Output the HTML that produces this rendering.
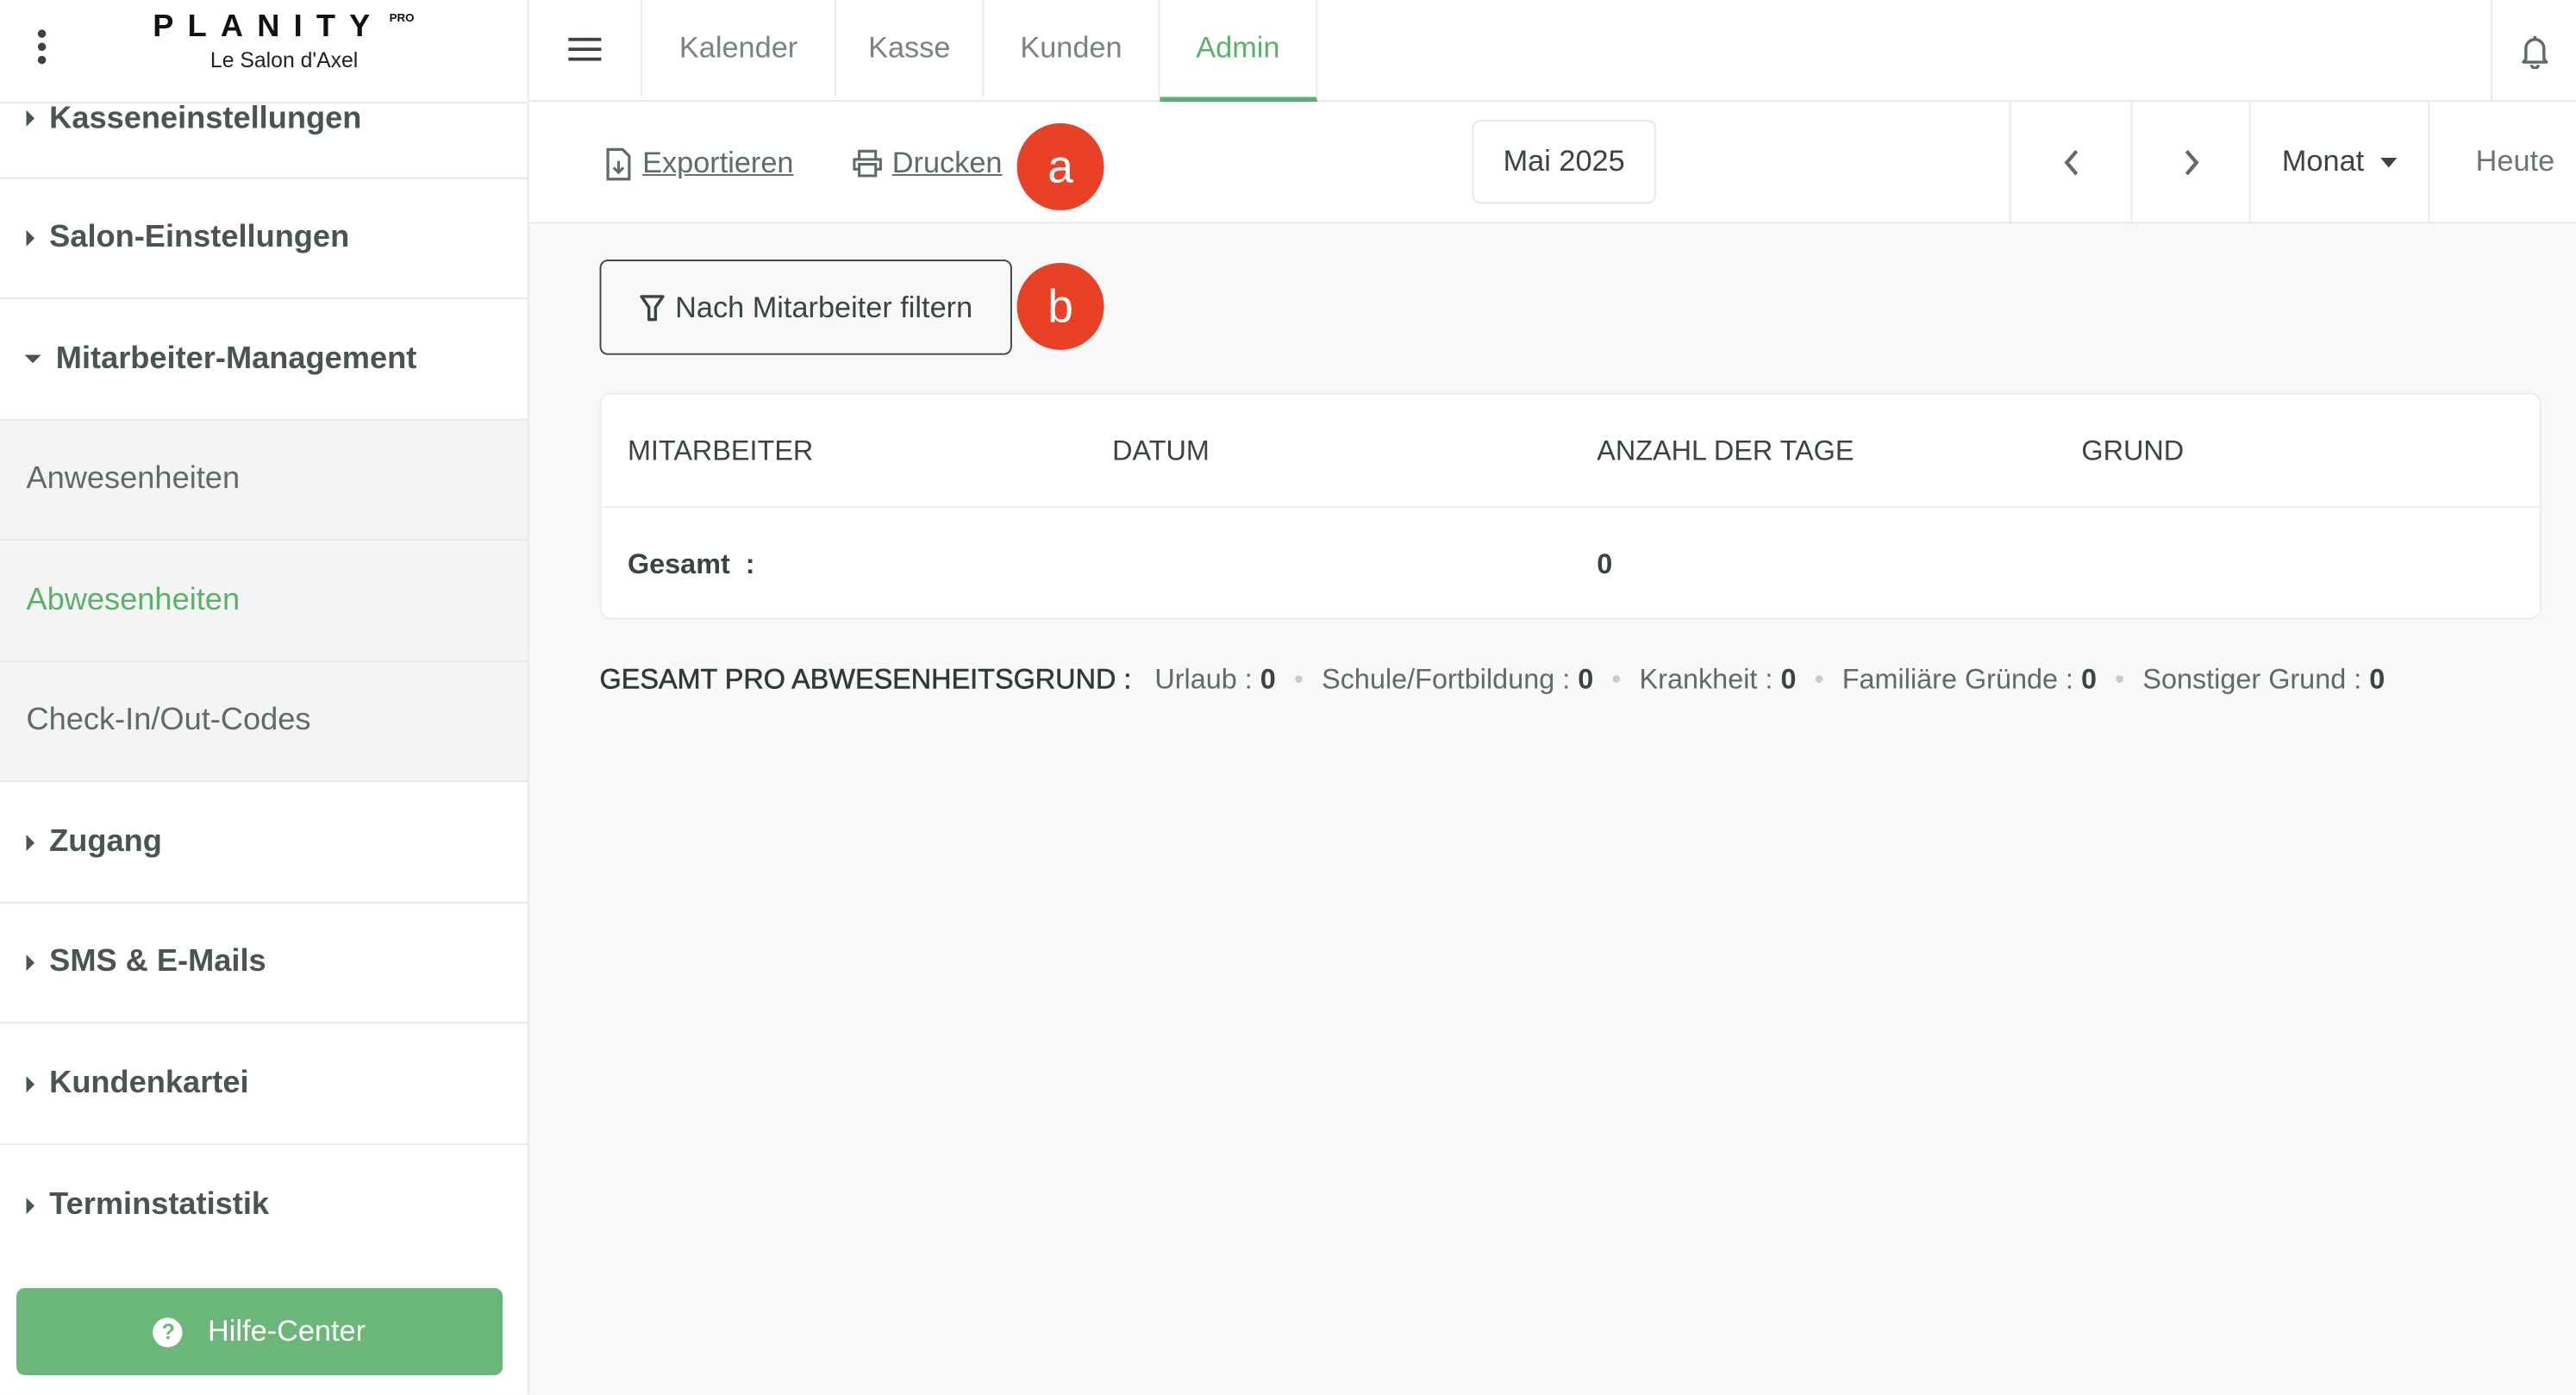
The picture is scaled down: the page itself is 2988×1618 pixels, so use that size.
<!DOCTYPE html>
<html><head><meta charset="utf-8"><style>
*{box-sizing:border-box;margin:0;padding:0}
html,body{width:2988px;height:1618px;overflow:hidden;background:#f8f8f8}
#w{position:absolute;left:0;top:0;width:1568px;height:849px;transform:scale(1.90561);transform-origin:0 0;font-family:"Liberation Sans",sans-serif;color:#3a4440;background:#f8f8f8}
.a{position:absolute}
.side{left:0;top:0;width:322px;height:849px;background:#fff;border-right:1px solid #e8e8e8}
.item{position:absolute;left:0;width:321px;border-bottom:1px solid #e8e8e8;font-size:19px;font-weight:bold;color:#4a5450;padding-left:30px;display:flex;align-items:center}
.item .tri{position:absolute;left:16px;width:0;height:0;border-top:5px solid transparent;border-bottom:5px solid transparent;border-left:5px solid #4a5450}
.sub{background:#f4f4f4;font-weight:normal;color:#5f6b66;padding-left:16px}
.top{left:322px;top:0;width:1246px;height:62px;background:#fff;border-bottom:1px solid #e8e8e8}
.tab{position:absolute;top:0;height:59px;border-right:1px solid #eaeaea;font-size:18px;color:#7a8480;display:flex;align-items:center;justify-content:center}
.bar{left:322px;top:62px;width:1246px;height:74px;background:#fff;border-bottom:1px solid #e8e8e8}
.cell{position:absolute;top:0;height:73px;border-left:1px solid #eaeaea;display:flex;align-items:center;justify-content:center;font-size:18px}
.badge{position:absolute;width:53px;height:53px;border-radius:50%;background:#e84127;color:#fff;font-size:28px;display:flex;align-items:center;justify-content:center}
.lnk{font-size:18px;color:#5f6b66;text-decoration:underline}
.th{position:absolute;top:25px;font-size:17px;color:#3a4440}
.sum{left:365px;top:404px;font-size:17px;color:#5f6b66;white-space:nowrap}
.sum b{color:#3a4440}
.dot{color:#c8cdcb;margin:0 11px}
</style></head><body><div id="w">
<div class="a side">
 <div class="a" style="left:23px;top:18px;width:6px">
  <div style="width:5px;height:5px;border-radius:50%;background:#3a4440;margin-bottom:3px"></div>
  <div style="width:5px;height:5px;border-radius:50%;background:#3a4440;margin-bottom:3px"></div>
  <div style="width:5px;height:5px;border-radius:50%;background:#3a4440"></div>
 </div>
 <div class="a" style="left:93px;top:6px;font-size:19px;font-weight:bold;letter-spacing:8.5px;color:#111">PLANITY</div>
 <div class="a" style="left:237px;top:8px;font-size:7px;color:#111;font-weight:bold">PRO</div>
 <div class="a" style="left:128px;top:29px;font-size:13px;color:#222">Le Salon d'Axel</div>
 <div class="a" style="left:0;top:62px;width:321px;height:1px;background:#e8e8e8"></div>
 <div class="item" style="top:62px;height:47px;align-items:flex-start;padding-top:0"><span class="tri" style="top:5px"></span>Kasseneinstellungen</div>
 <div class="item" style="top:109px;height:73px"><span class="tri"></span>Salon-Einstellungen</div>
 <div class="item" style="top:182px;height:74px;padding-left:34px"><span class="tri" style="border-left:5px solid transparent;border-right:5px solid transparent;border-top:5px solid #4a5450;border-bottom:0;left:15px"></span>Mitarbeiter-Management</div>
 <div class="item sub" style="top:256px;height:73px">Anwesenheiten</div>
 <div class="item sub" style="top:329px;height:74px;color:#5cb06c">Abwesenheiten</div>
 <div class="item sub" style="top:403px;height:73px">Check-In/Out-Codes</div>
 <div class="item" style="top:476px;height:74px"><span class="tri"></span>Zugang</div>
 <div class="item" style="top:550px;height:73px"><span class="tri"></span>SMS &amp; E-Mails</div>
 <div class="item" style="top:623px;height:74px"><span class="tri"></span>Kundenkartei</div>
 <div class="item" style="top:697px;height:73px;border-bottom:0"><span class="tri"></span>Terminstatistik</div>
 <div class="a" style="left:10px;top:784px;width:296px;height:53px;background:#6ab779;border-radius:5px;color:#fff;font-size:18px;display:flex;align-items:center;justify-content:center">
  <span style="width:18px;height:18px;border-radius:50%;background:#fff;color:#6ab779;font-size:13px;font-weight:bold;display:inline-flex;align-items:center;justify-content:center;margin-right:15px">?</span>Hilfe-Center</div>
</div>
<div class="a top">
 <div class="tab" style="left:0;width:69px"><div><div style="width:20px;height:2px;background:#3a4440;margin:4px 0"></div><div style="width:20px;height:2px;background:#3a4440;margin:4px 0"></div><div style="width:20px;height:2px;background:#3a4440;margin:4px 0"></div></div></div>
 <div class="tab" style="left:69px;width:118px">Kalender</div>
 <div class="tab" style="left:187px;width:90px">Kasse</div>
 <div class="tab" style="left:277px;width:107px">Kunden</div>
 <div class="tab" style="left:384px;width:96px;height:62px;color:#5cb06c;border-bottom:3px solid #5cb06c">Admin</div>
 <div class="tab" style="left:1194px;width:52px;height:62px;border-right:0;border-left:1px solid #eaeaea">
  <svg width="20" height="22" viewBox="0 0 20 22"><path d="M10 2v1.5M4.5 16V9.5a5.5 5.5 0 0111 0V16l1.5 1.8H3L4.5 16zM8 19.5a2 2 0 004 0" fill="none" stroke="#5f6b66" stroke-width="1.8" stroke-linejoin="round"/></svg></div>
</div>
<div class="a bar">
 <div class="a" style="left:46px;top:27px;display:flex;align-items:center">
  <svg width="17" height="20" viewBox="0 0 17 20"><path d="M2 1h9l4 4v14H2z" fill="none" stroke="#5f6b66" stroke-width="1.7"/><path d="M8.5 8v7M5.5 12l3 3 3-3" fill="none" stroke="#5f6b66" stroke-width="1.6"/></svg>
  <span class="lnk" style="margin-left:6px">Exportieren</span></div>
 <div class="a" style="left:197px;top:27px;display:flex;align-items:center">
  <svg width="18" height="17" viewBox="0 0 18 17"><path d="M4 6V1h10v5M4 12H1V6h16v6h-3M4 9h10v7H4z" fill="none" stroke="#5f6b66" stroke-width="1.6"/></svg>
  <span class="lnk" style="margin-left:6px">Drucken</span></div>
 <div class="badge" style="left:297px;top:13px">a</div>
 <div class="a" style="left:574px;top:11px;width:112px;height:51px;border:1px solid #e8e8e8;border-radius:5px;background:#fff;display:flex;align-items:center;justify-content:center;font-size:18px;color:#3a4440">Mai 2025</div>
 <div class="cell" style="left:901px;width:74px"><svg width="12" height="18" viewBox="0 0 12 18"><path d="M9 2L3 9l6 7" fill="none" stroke="#5f6b66" stroke-width="2.2"/></svg></div>
 <div class="cell" style="left:975px;width:72px"><svg width="12" height="18" viewBox="0 0 12 18"><path d="M3 2l6 7-6 7" fill="none" stroke="#5f6b66" stroke-width="2.2"/></svg></div>
 <div class="cell" style="left:1047px;width:109px;color:#3a4440">Monat<span style="margin-left:10px;width:0;height:0;border-left:5px solid transparent;border-right:5px solid transparent;border-top:6px solid #3a4440"></span></div>
 <div class="cell" style="left:1156px;width:90px;color:#6b7571;justify-content:flex-end;padding-right:13px">Heute</div>
</div>
<div class="a" style="left:365px;top:158px;width:251px;height:58px;border:1px solid #3a4440;border-radius:5px;display:flex;align-items:center;justify-content:center;font-size:18px;color:#3a4440">
 <svg width="16" height="17" viewBox="0 0 16 17" style="margin-right:6px"><path d="M1.5 1.5h13L10 8v7.5H6V8z" fill="none" stroke="#3a4440" stroke-width="1.8" stroke-linejoin="round"/></svg>Nach Mitarbeiter filtern</div>
<div class="badge" style="left:619px;top:160px">b</div>
<div class="a" style="left:365px;top:239px;width:1182px;height:138px;background:#fff;border:1px solid #ececec;border-radius:7px">
 <div class="th" style="left:16px">MITARBEITER</div>
 <div class="th" style="left:311px">DATUM</div>
 <div class="th" style="left:606px">ANZAHL DER TAGE</div>
 <div class="th" style="left:901px">GRUND</div>
 <div class="a" style="left:0;top:68px;width:1180px;height:1px;background:#ececec"></div>
 <div class="th" style="left:16px;top:94px;font-weight:bold">Gesamt &nbsp;:</div>
 <div class="th" style="left:606px;top:94px;font-weight:bold">0</div>
</div>
<div class="a sum"><span style="color:#2f3935;-webkit-text-stroke:0.3px #2f3935">GESAMT PRO ABWESENHEITSGRUND :</span>&nbsp;&nbsp; Urlaub : <b>0</b><span class="dot">•</span>Schule/Fortbildung : <b>0</b><span class="dot">•</span>Krankheit : <b>0</b><span class="dot">•</span>Familiäre Gründe : <b>0</b><span class="dot">•</span>Sonstiger Grund : <b>0</b></div>
</div></body></html>
